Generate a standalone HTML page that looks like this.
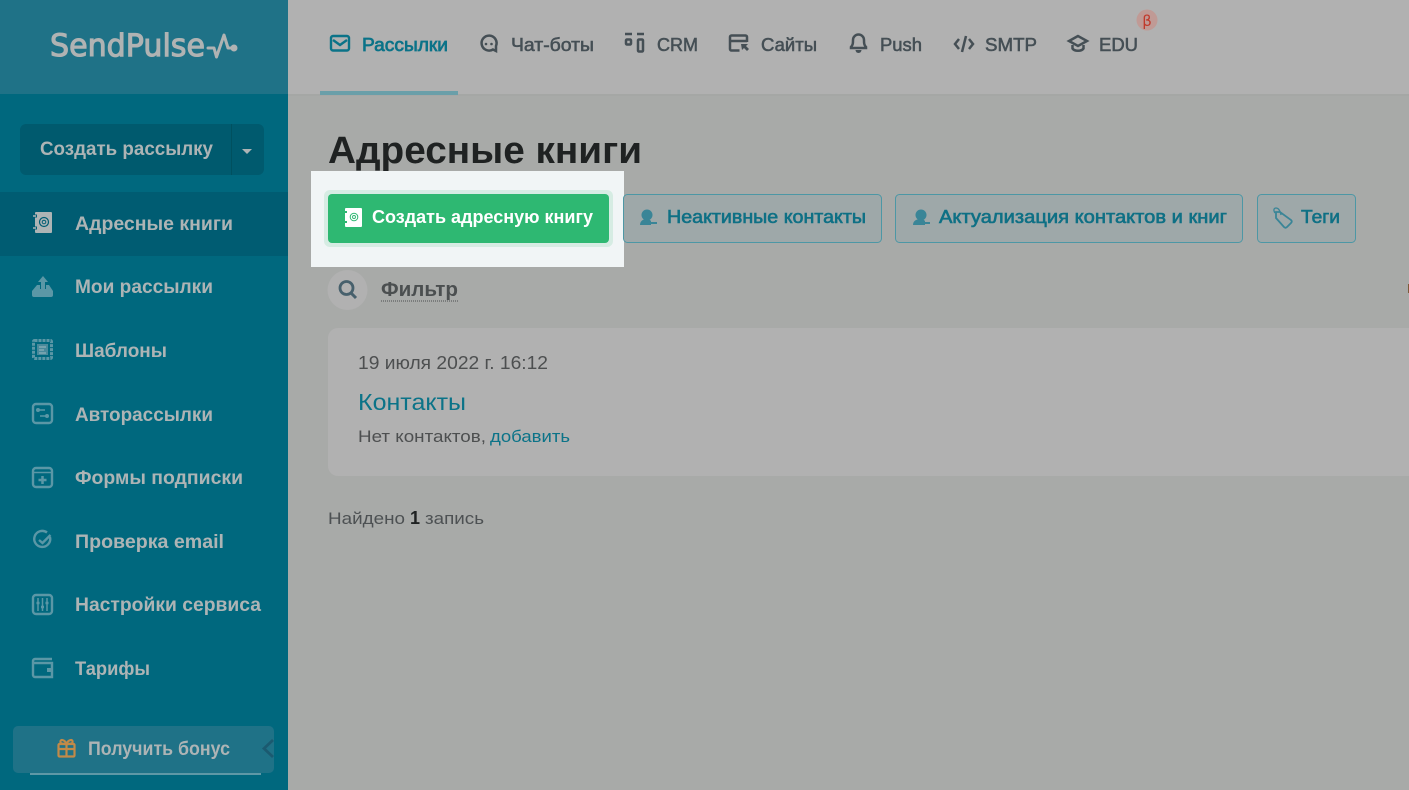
<!DOCTYPE html>
<html lang="ru"><head><meta charset="utf-8"><title>SendPulse</title>
<style>
html,body{margin:0;padding:0;width:1409px;height:790px;overflow:hidden;background:#a8aaa8}
svg{display:block}
text{font-family:"Liberation Sans","DejaVu Sans",sans-serif}
.side{font-weight:700;font-size:19px;fill:#adb4b5}
.nav{font-size:18px;fill:#454f55;font-weight:400;stroke:#454f55;stroke-width:.55}
.btn{font-size:18px;font-weight:400;fill:#0f7085;stroke:#0f7085;stroke-width:.6}
.si{fill:none;stroke:#5b97a6;stroke-width:2.4}
.ni{fill:none;stroke:#454f55;stroke-width:2.5}
</style></head><body>
<svg width="1409" height="790" viewBox="0 0 1409 790" xmlns="http://www.w3.org/2000/svg">
<rect width="1409" height="790" fill="#a8aaa8"/>
<rect x="288" width="1121" height="94" fill="#b1b1b1"/>
<rect x="288" y="94" width="1121" height="2" fill="#a5a7a5"/>
<rect width="288" height="790" fill="#00687e"/>
<rect width="288" height="94" fill="#1f7287"/>
<rect y="192" width="288" height="64" fill="#005c72"/>

<!-- logo -->
<text x="50" y="56" font-size="31" textLength="155" lengthAdjust="spacingAndGlyphs" fill="#b0b3b3" stroke="#b0b3b3" stroke-width="1.1" style="font-family:'DejaVu Sans',sans-serif">SendPulse</text>
<path d="M208 48h6l2.500 9 7.500-22 4 13h6" fill="none" stroke="#b0b3b3" stroke-width="3" stroke-linejoin="round" stroke-linecap="round"/>
<circle cx="234" cy="48" r="3.500" fill="#b0b3b3"/>

<!-- create button -->
<rect x="20" y="124" width="244" height="51" rx="6" fill="#005a6e"/>
<rect x="231" y="124" width="1" height="51" fill="#00505f"/>
<text x="40" y="155" class="side" textLength="173" lengthAdjust="spacingAndGlyphs">Создать рассылку</text>
<path d="M242 149h10l-5 5z" fill="#adb4b5"/>

<!-- sidebar items -->
<text x="75" y="230" class="side" textLength="158" lengthAdjust="spacingAndGlyphs">Адресные книги</text>
<text x="75" y="293" class="side" textLength="138" lengthAdjust="spacingAndGlyphs">Мои рассылки</text>
<text x="75" y="357" class="side" textLength="92" lengthAdjust="spacingAndGlyphs">Шаблоны</text>
<text x="75" y="421" class="side" textLength="138" lengthAdjust="spacingAndGlyphs">Авторассылки</text>
<text x="75" y="484" class="side" textLength="168" lengthAdjust="spacingAndGlyphs">Формы подписки</text>
<text x="75" y="548" class="side" textLength="149" lengthAdjust="spacingAndGlyphs">Проверка email</text>
<text x="75" y="611" class="side" textLength="186" lengthAdjust="spacingAndGlyphs">Настройки сервиса</text>
<text x="75" y="675" class="side" textLength="75" lengthAdjust="spacingAndGlyphs">Тарифы</text>

<!-- sidebar icons -->
<rect x="35" y="212" width="17" height="21" rx="1" fill="#adb4b5"/>
<path d="M33 216h4M33 228h4" stroke="#005d74" stroke-width="3"/>
<path d="M33 216h3M33 228h3" stroke="#adb4b5" stroke-width="1.500"/>
<circle cx="44" cy="222" r="4.500" fill="none" stroke="#005d74" stroke-width="1.200"/>
<circle cx="44" cy="222" r="1.800" fill="none" stroke="#005d74" stroke-width="1"/>

<path d="M32 291l5-6h3v4h6v-4h3l4 6v4a2 2 0 0 1-2 2H34a2 2 0 0 1-2-2z" fill="#5b97a6"/>
<path d="M43 276l-5 6h3v8h4v-8h3z" fill="#5b97a6"/>

<rect x="33.500" y="340.500" width="18" height="18" rx="1" fill="none" stroke="#5b97a6" stroke-width="3" stroke-dasharray="3 1"/>
<rect x="37" y="344" width="11" height="11" fill="#4a8a9b"/>
<path d="M39 347h7M39 350h5M39 353h7" stroke="#9db9c0" stroke-width="1.100"/>

<rect x="33" y="404" width="19" height="19" rx="3" class="si"/>
<path d="M37 410h8M40 416h8" stroke="#5b97a6" stroke-width="1.500"/>
<circle cx="38" cy="410" r="2" fill="#5b97a6"/><circle cx="47" cy="416" r="2" fill="#5b97a6"/>

<rect x="33" y="468" width="19" height="19" rx="3" class="si"/>
<path d="M33 472.500h19" stroke="#5b97a6" stroke-width="1.500"/>
<path d="M42.500 476v8M38.500 480h8" stroke="#5b97a6" stroke-width="2.500"/>

<path d="M50 537a8 8 0 1 1-3-4.500" class="si"/>
<path d="M39 540l3.500 3 8-8" class="si"/>

<rect x="33" y="595" width="19" height="19" rx="3" class="si"/>
<path d="M38 598v13M47 598v13" stroke="#5b97a6" stroke-width="1.500"/>
<path d="M42.500 598v13" stroke="#5b97a6" stroke-width="1.500"/>
<path d="M36.500 603h3M41 607h3M45.500 603h3" stroke="#5b97a6" stroke-width="2.500"/>

<path d="M52 659H35a2 2 0 0 0-2 2v14a2 2 0 0 0 2 2h17v-14H33" class="si"/>
<rect x="47" y="668" width="5" height="4" fill="#5b97a6"/>

<!-- bonus -->
<rect x="13" y="726" width="261" height="47" rx="5" fill="#1f7287"/>
<rect x="30" y="773" width="231" height="2" fill="#5e98a6"/>
<text x="88" y="755" class="side" textLength="142" lengthAdjust="spacingAndGlyphs">Получить бонус</text>
<g fill="none" stroke="#c28a48" stroke-width="2.200">
<rect x="58.500" y="744" width="16" height="12.500" rx="1"/>
<path d="M58.500 749h16M66.500 744v12.500"/>
<path d="M66.500 744c-2-5-7-5-6-1.500 .5 1.500 3 1.500 6 1.500c3 0 5.500 0 6-1.500 1-3.500-4-3.500-6 1.500"/>
</g>
<path d="M273 740l-9 8.500 9 8.500" fill="none" stroke="#1b5a70" stroke-width="2.800"/>

<!-- top nav -->
<rect x="320" y="91" width="138" height="4" fill="#6a9fa9"/>
<text x="362" y="51" class="nav" style="fill:#0b7388;stroke:#0b7388;stroke-width:.7" textLength="86" lengthAdjust="spacingAndGlyphs">Рассылки</text>
<text x="511" y="51" class="nav" textLength="83" lengthAdjust="spacingAndGlyphs">Чат-боты</text>
<text x="657" y="51" class="nav" textLength="41" lengthAdjust="spacingAndGlyphs">CRM</text>
<text x="761" y="51" class="nav" textLength="56" lengthAdjust="spacingAndGlyphs">Сайты</text>
<text x="880" y="51" class="nav" textLength="42" lengthAdjust="spacingAndGlyphs">Push</text>
<text x="985" y="51" class="nav" textLength="52" lengthAdjust="spacingAndGlyphs">SMTP</text>
<text x="1099" y="51" class="nav" textLength="39" lengthAdjust="spacingAndGlyphs">EDU</text>

<rect x="331" y="36" width="18" height="14.500" rx="2" fill="none" stroke="#0b7388" stroke-width="2.400"/>
<path d="M333 40l7 5 7-5" fill="none" stroke="#0b7388" stroke-width="2.400"/>

<path d="M493 49.500a7.500 7.500 0 1 1 3-3.500v5z" class="ni"/>
<circle cx="486" cy="44" r="1.300" fill="#454f55"/><circle cx="491.500" cy="44" r="1.300" fill="#454f55"/>

<path d="M625 34h7M637 34h7" stroke="#454f55" stroke-width="2.500"/>
<rect x="626" y="39.500" width="5" height="5" rx="1" class="ni"/>
<rect x="638" y="39.500" width="5" height="12" rx="1" class="ni"/>

<path d="M747 42v-5a1.500 1.500 0 0 0-1.500-1.500h-14a1.500 1.500 0 0 0-1.500 1.500v12a1.500 1.500 0 0 0 1.500 1.500h8M730 41h17" class="ni"/>
<path d="M741 44h7l-2 2 3 3-2 2-3-3-2 2z" fill="#454f55"/>

<path d="M851 47c2-2 2-4 2-7a5.500 5.500 0 0 1 11 0c0 3 0 5 2 7v1h-15z" class="ni"/>
<path d="M855.500 50h6a3 3 0 0 1-6 0z" fill="#454f55"/>

<path d="M959 39l-4 5 4 5M969 39l4 5-4 5" class="ni"/>
<path d="M966 36l-4 16" class="ni"/>

<path d="M1078 36l-9 5 9 5 9-5z" class="ni"/>
<path d="M1072.500 45v3.500c2 3 9 3 11 0V45" class="ni"/>

<circle cx="1147" cy="20" r="10.500" fill="#c09a95"/>
<text x="1147" y="26" font-size="15" text-anchor="middle" fill="#c0392b" style="font-family:'DejaVu Sans',sans-serif">β</text>

<!-- title -->
<text x="328" y="163" font-size="38" font-weight="700" fill="#1f2222" textLength="314" lengthAdjust="spacingAndGlyphs">Адресные книги</text>

<!-- highlighted -->
<rect x="311" y="171" width="313" height="96" fill="#f1f5f6"/>
<rect x="324" y="190" width="289" height="57" rx="6" fill="#d6ece3"/>
<rect x="328" y="194" width="281" height="49" rx="4" fill="#2eb872"/>
<rect x="345" y="208" width="17" height="19" rx="1" fill="#fff"/>
<path d="M344 212h3M344 222h3" stroke="#2eb872" stroke-width="2"/>
<circle cx="354" cy="217" r="3.800" fill="none" stroke="#2eb872" stroke-width="1"/>
<circle cx="354" cy="217" r="1.500" fill="none" stroke="#2eb872" stroke-width=".9"/>
<text x="372" y="223" font-size="18" font-weight="700" fill="#fff" textLength="221" lengthAdjust="spacingAndGlyphs">Создать адресную книгу</text>

<!-- outline buttons -->
<g fill="#9ea8a9" stroke="#4d97a5">
<rect x="623.500" y="194.500" width="258" height="48" rx="4"/>
<rect x="895.500" y="194.500" width="347" height="48" rx="4"/>
<rect x="1257.500" y="194.500" width="98" height="48" rx="4"/>
</g>
<text x="667" y="223" class="btn" textLength="199" lengthAdjust="spacingAndGlyphs">Неактивные контакты</text>
<text x="939" y="223" class="btn" textLength="288" lengthAdjust="spacingAndGlyphs">Актуализация контактов и книг</text>
<text x="1301" y="223" class="btn" textLength="39" lengthAdjust="spacingAndGlyphs">Теги</text>

<g fill="#3a8597">
<circle cx="647" cy="215" r="5.500"/><path d="M640 225c0-4 3-6 7-6 2 0 3 1 4 2v4z"/>
<rect x="651" y="222" width="6" height="2"/>
<circle cx="921" cy="215" r="5.500"/><path d="M913 225c0-4 3-6 8-6 2 0 3 1 4 2v4z"/>
<rect x="923" y="222" width="7" height="2"/>
</g>
<path d="M1276 212h4l11 8c1 1 1 2 0 3l-4 4c-1 1-2 1-3 0l-8-9z" fill="none" stroke="#3a8597" stroke-width="1.800"/>
<path d="M1275 213c-2-3-1-5 1-5 2 0 4 2 5 7" fill="none" stroke="#3a8597" stroke-width="1.300"/>

<!-- filter -->
<circle cx="347.500" cy="290" r="20" fill="#b1b1b1"/>
<circle cx="346.500" cy="288" r="6.500" fill="none" stroke="#47606c" stroke-width="2.800"/>
<path d="M351 293l5 5" stroke="#47606c" stroke-width="3"/>
<text x="381" y="296" font-size="20" font-weight="700" fill="#4b4f50" textLength="77" lengthAdjust="spacingAndGlyphs">Фильтр</text>
<path d="M381 301h77" stroke="#4b4f50" stroke-dasharray="1 1"/>
<rect x="1408" y="284" width="1" height="9" fill="#7d5a3a"/>

<!-- card -->
<rect x="328" y="328" width="1100" height="148" rx="10" fill="#b1b1b1"/>
<text x="358" y="369" font-size="18" fill="#4d4f50" textLength="190" lengthAdjust="spacingAndGlyphs">19 июля 2022 г. 16:12</text>
<text x="358" y="410" font-size="23" fill="#0b7388" textLength="108" lengthAdjust="spacingAndGlyphs">Контакты</text>
<text x="358" y="442" font-size="17" fill="#4d4f50" textLength="128" lengthAdjust="spacingAndGlyphs">Нет контактов,</text>
<text x="490" y="442" font-size="17" fill="#0b7388" textLength="80" lengthAdjust="spacingAndGlyphs">добавить</text>

<text x="328" y="524" font-size="17" fill="#4d5153" textLength="77" lengthAdjust="spacingAndGlyphs">Найдено</text>
<text x="410" y="524" font-size="18" font-weight="700" fill="#1f2222">1</text>
<text x="425" y="524" font-size="17" fill="#4d5153" textLength="59" lengthAdjust="spacingAndGlyphs">запись</text>
</svg>
</body></html>
